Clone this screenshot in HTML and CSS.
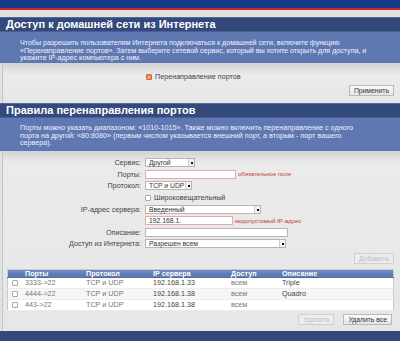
FILE: index.html
```html
<!DOCTYPE html>
<html lang="ru">
<head>
    <meta charset="UTF-8">
    <title>Перенаправление портов</title>
    <link rel="stylesheet" href="styles.css">
</head>
<body>

<div class="topbar"></div>

<div class="panel">
    <h2 class="panel-title">Доступ к домашней сети из Интернета</h2>
    <div class="panel-desc first">
        Чтобы разрешить пользователям Интернета подключаться к домашней сети, включите функцию<br>
        «Перенаправление портов». Затем выберите сетевой сервис, который вы хотите открыть для доступа, и<br>
        укажите IP-адрес компьютера с ним.
    </div>
    <div class="panel-body first">
        <label class="check-line"><span class="check checked">✓</span>Перенаправление портов</label>
        <div class="btn-row"><span class="btn">Применить</span></div>
    </div>
</div>

<div class="panel">
    <h2 class="panel-title">Правила перенаправления портов</h2>
    <div class="panel-desc">
        Порты можно указать диапазоном: «1010-1015». Также можно включить перенаправление с одного<br>
        порта на другой: «80:8080» (первым числом указывается внешний порт, а вторым - порт вашего<br>
        сервера).
    </div>
    <div class="panel-body">
        <div class="form-grid">
            <span class="lbl">Сервис:</span>
            <div class="ctl"><span class="select w50">Другой<i class="arrow"></i></span></div>

            <span class="lbl">Порты:</span>
            <div class="ctl"><span class="input w91 bad"></span><span class="err">обязательное поле</span></div>

            <span class="lbl">Протокол:</span>
            <div class="ctl"><span class="select w47">TCP и UDP<i class="arrow"></i></span></div>

            <span class="lbl"></span>
            <div class="ctl"><span class="check"></span>Широковещательный</div>

            <span class="lbl">IP-адрес сервера:</span>
            <div class="ctl"><span class="select w116">Введенный<i class="arrow"></i></span></div>

            <span class="lbl"></span>
            <div class="ctl"><span class="input w88 bad">192.168.1.</span><span class="err">недопустимый IP-адрес</span></div>

            <span class="lbl">Описание:</span>
            <div class="ctl"><span class="input w143"></span></div>

            <span class="lbl">Доступ из Интернета:</span>
            <div class="ctl"><span class="select w141">Разрешен всем<i class="arrow"></i></span></div>
        </div>

        <div class="btn-row add"><span class="btn disabled">Добавить</span></div>

        <table class="rules">
            <thead>
                <tr>
                    <th class="c-check"></th>
                    <th class="c-ports">Порты</th>
                    <th class="c-proto">Протокол</th>
                    <th class="c-ip">IP сервера</th>
                    <th class="c-access">Доступ</th>
                    <th>Описание</th>
                </tr>
            </thead>
            <tbody>
                <tr>
                    <td class="c-check"><span class="check"></span></td>
                    <td>3333-&gt;22</td>
                    <td>TCP и UDP</td>
                    <td class="dark">192.168.1.33</td>
                    <td>всем</td>
                    <td class="dark">Triple</td>
                </tr>
                <tr>
                    <td class="c-check"><span class="check"></span></td>
                    <td>4444-&gt;22</td>
                    <td>TCP и UDP</td>
                    <td class="dark">192.168.1.38</td>
                    <td>всем</td>
                    <td class="dark">Quadro</td>
                </tr>
                <tr>
                    <td class="c-check"><span class="check"></span></td>
                    <td>443-&gt;22</td>
                    <td>TCP и UDP</td>
                    <td class="dark">192.168.1.38</td>
                    <td>всем</td>
                    <td></td>
                </tr>
            </tbody>
        </table>

        <div class="btn-row bottom">
            <span class="btn disabled">Удалить</span>
            <span class="btn">Удалить все</span>
        </div>
    </div>
</div>

<div class="footbar"></div>

</body>
</html>
```

FILE: styles.css
```css
body {
    margin: 0;
    padding: 0;
    width: 400px;
    height: 341px;
    overflow: hidden;
    background-color: #e2e2e2;
    font-family: "Liberation Sans", Arial, sans-serif;
    font-size: 7.2px;
    color: #333;
}
.topbar {
    height: 8px;
    background-color: #163a8a;
    border-bottom: 2px solid #d2232a;
    margin-bottom: 7px;
}
.panel-title {
    margin: 0;
    height: 13px;
    line-height: 13px;
    padding-left: 6px;
    background-color: #34497b;
    color: #fff;
    font-size: 11px;
    font-weight: bold;
    border-top: 1px solid #53679a;
}
.panel-desc {
    box-sizing: border-box;
    height: 34px;
    background-color: #5f78b2;
    color: #eef2fa;
    padding: 6px 20px 0 20px;
    line-height: 7.7px;
    border-top: 1px solid #4a5f92;
    white-space: nowrap;
}
.panel-desc.first {
    height: 32px;
    padding-top: 7px;
    letter-spacing: -0.05px;
}
.panel-body {
    background: linear-gradient(#d3d3d3, #ebebeb 12px, #e6e6e6);
    border-left: 1px solid #c4c4c4;
    margin-left: 2px;
    padding: 6px 6px 6px 4px;
}
.panel-body.first {
    box-sizing: border-box;
    height: 40px;
    padding-top: 9px;
    padding-bottom: 0;
}
.check-line {
    display: flex;
    align-items: center;
    padding-left: 139px;
    height: 9px;
    color: #444;
}
.panel-body.first .btn-row {
    margin-top: 4px;
}
.check {
    display: inline-block;
    box-sizing: border-box;
    width: 6px;
    height: 6px;
    border: 1px solid #a8a8a8;
    border-radius: 1px;
    background-color: #fff;
    margin-right: 3px;
    vertical-align: middle;
    font-size: 5px;
    line-height: 4px;
    text-align: center;
    color: #fff;
    overflow: hidden;
}
.check.checked {
    background-color: #e58a4a;
    border-color: #c0703a;
}
.btn-row {
    display: flex;
    justify-content: flex-end;
    gap: 9px;
}
.btn {
    display: inline-block;
    height: 9px;
    line-height: 9px;
    padding: 0 4px;
    border: 1px solid #b8b8b8;
    background: linear-gradient(#fbfbfb, #e4e4e4);
    color: #333;
    font-size: 6.8px;
}
.btn.disabled {
    color: #bdbdbd;
    border-color: #d0d0d0;
    background: #ededed;
}
.form-grid {
    display: grid;
    grid-template-columns: 134px 1fr;
    column-gap: 4px;
    grid-auto-rows: 11.6px;
    align-items: center;
}
.lbl {
    text-align: right;
    color: #444;
}
.ctl {
    display: flex;
    align-items: center;
    color: #444;
}
.select, .input {
    position: relative;
    box-sizing: border-box;
    height: 9px;
    line-height: 7px;
    padding-left: 3px;
    background-color: #fff;
    border: 1px solid #b5b5b5;
    color: #333;
    font-size: 6.8px;
}
.input.bad {
    border-color: #e6a8a8;
}
.arrow {
    position: absolute;
    right: 0;
    top: 0;
    width: 5px;
    height: 7px;
    border-left: 1px solid #ccc;
    background: #f2f2f2;
}
.arrow::after {
    content: "";
    position: absolute;
    left: 2px;
    top: 3px;
    width: 2px;
    height: 2px;
    background: #111;
}
.w47 { width: 47px; }
.w50 { width: 50px; }
.w88 { width: 88px; }
.w91 { width: 91px; }
.w116 { width: 116px; }
.w141 { width: 141px; }
.w143 { width: 143px; }
.err {
    margin-left: 2px;
    color: #c23b3b;
    font-size: 6px;
}
.btn-row.add {
    margin-top: 3px;
}
.rules {
    width: 100%;
    table-layout: fixed;
    border-collapse: collapse;
    margin-top: 5px;
    background-color: #fff;
    border: 1px solid #c9c9c9;
}
.rules th {
    height: 7px;
    line-height: 7px;
    padding: 0;
    text-align: left;
    color: #fff;
    font-weight: bold;
    background: linear-gradient(#7590c8, #5572ab);
    border-bottom: 1px solid #4d67a0;
}
.rules td {
    height: 10px;
    line-height: 10px;
    padding: 0;
    color: #777;
    border-bottom: 1px solid #ececec;
}
.rules tbody tr:nth-child(2) td {
    background-color: #f6f6f6;
}
.rules td.dark {
    color: #444;
}
.rules .c-check {
    width: 13px;
    padding-left: 4px;
}
.c-ports { width: 61px; }
.c-proto { width: 67px; }
.c-ip { width: 78px; }
.c-access { width: 51px; }
.btn-row.bottom {
    margin-top: 3px;
    padding-right: 2px;
}
.footbar {
    height: 10px;
    background-color: #34497b;
}
```
